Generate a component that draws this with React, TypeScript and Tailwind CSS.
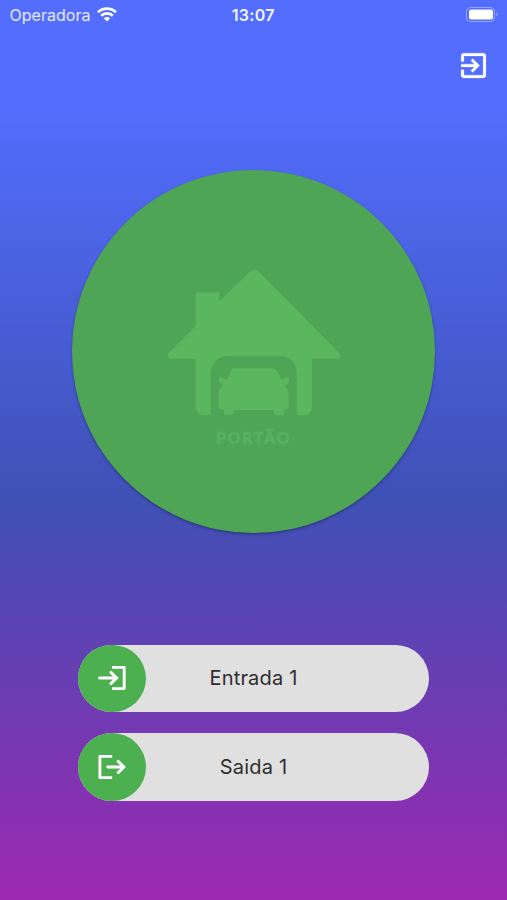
import type { ReactNode } from "react";

function StatusBar() {
  return (
    <div className="grid h-[29px] grid-cols-3 items-center pl-[9.5px] pr-[8px] text-white">
      <div className="flex items-center gap-[7px]">
        <span className="text-[16px] tracking-[0.02px] text-white/85">Operadora</span>
        <svg viewBox="0 0 20 15" className="h-[15px] w-[20px]" fill="none" stroke="white" strokeWidth="2.7">
          <path d="M1 5.2a13 13 0 0 1 18 0" />
          <path d="M4.2 8.7a8.4 8.4 0 0 1 11.6 0" />
          <path d="M10 14.6 6.9 11.4a4.5 4.5 0 0 1 6.2 0z" fill="white" stroke="none" />
        </svg>
      </div>
      <span className="-ml-[2px] text-center text-[16px] font-semibold tracking-[0.3px] text-white/95">13:07</span>
      <svg viewBox="0 0 34 18" className="h-[18px] w-[34px] justify-self-end">
        <rect x="1.5" y="1.5" width="28" height="14" rx="4" fill="none" stroke="white" strokeOpacity="0.4" />
        <rect x="4" y="3.5" width="24" height="10" rx="2.2" fill="white" />
        <path d="M31.3 6.5c1.8.7 1.8 3.3 0 4z" fill="white" fillOpacity="0.4" />
      </svg>
    </div>
  );
}

function ExitIcon() {
  return (
    <svg viewBox="0 0 24 24" className="h-[33px] w-[33px]" fill="white" stroke="white" strokeWidth="0.2">
      <path d="M10.09 15.59 11.5 17l5-5-5-5-1.41 1.41L12.67 11H3v2h9.67l-2.58 2.59zM19 3H5a2 2 0 0 0-2 2v4h2V5h14v14H5v-4H3v4c0 1.1.89 2 2 2h14c1.1 0 2-.9 2-2V5a2 2 0 0 0-2-2z" />
    </svg>
  );
}

function EnterArrow() {
  return (
    <svg viewBox="0 0 30 30" className="h-[30px] w-[30px]" fill="none" stroke="white" strokeWidth="2.9" strokeLinejoin="round">
      <path d="M15 4.4h12.2v21.2H15" />
      <path d="M2.5 15h17.5M13.9 9.4l5.8 5.6-5.8 5.6" strokeLinecap="round" />
    </svg>
  );
}

function LeaveArrow() {
  return (
    <svg viewBox="0 0 30 30" className="h-[30px] w-[30px]" fill="none" stroke="white" strokeWidth="2.9" strokeLinejoin="round">
      <path d="M15.2 4.4H2.9v21.2h12.3" />
      <path d="M10.7 15h16.4M21.2 9.4l5.8 5.6-5.8 5.6" strokeLinecap="round" />
    </svg>
  );
}

function GarageLogo() {
  return (
    <svg viewBox="-3 -1 570 480" className="h-[160px] w-[190px]" fill="#5ab65f">
      {/* house */}
      <path d="M270 33q12-10 25 0L535 275q6 6 5 18l-5 2h-79v142q0 28-28 28h-9q-9 0-9-9V338Q407 287 358 287H204Q153 290 152 340V456q0 9-9 9h-8q-28-2-28-27V295H30q-7 0-6-13 1-4 6-8l77-76v-94q0-8 8-8h56q8 0 8 8v19z" />
      {/* car */}
      <path d="M222 324h116q8 0 13 9l14 25 14-6q9-3 9 6-3 15-15 17l9 11q4 5 4 12v38q0 7-5 10l-8 3v9q0 7-7 7h-14q-7 0-9-6l-4-10H223l-3 10q-2 6-9 6h-12q-7 0-7-7v-9l-11-3q-6-3-6-10v-38q0-7 4-12l11-12q-12-3-15-16 1-10 11-6l14 6 13-26q3-9 9-9z" />
    </svg>
  );
}

function GateSlider({ label, icon }: { label: string; icon: ReactNode }) {
  return (
    <div className="grid h-[67.4px] w-[350.5px] grid-cols-[67.4px_1fr_67.4px] items-center rounded-full bg-[#e0e0e0]">
      <button className="flex h-[67.4px] w-[67.4px] items-center justify-center rounded-full bg-[#4caf50]">
        {icon}
      </button>
      <span className="text-center text-[20px] tracking-[0.2px] text-[#2e2e2e]">{label}</span>
    </div>
  );
}

export default function App() {
  return (
    <main className="flex h-[900px] w-[507px] flex-col overflow-hidden bg-[linear-gradient(to_bottom,#536dfe_103px,#3f51b5_501px,#9c27b0_900px)] font-['Inter',sans-serif]">
      <StatusBar />
      <header className="flex h-[73px] items-center justify-end pr-[17px]">
        <button aria-label="Sair">
          <ExitIcon />
        </button>
      </header>

      <section className="flex flex-col items-center pt-[67.5px]">
        <button className="flex h-[363.5px] w-[363.5px] flex-col items-center rounded-full bg-[#4fa556] pt-[90px] shadow-[0_1.5px_3px_rgba(0,0,0,0.3)]">
          <GarageLogo />
          <span className="mt-[7px] font-['Lato'] text-[16px] leading-[22px] font-black tracking-[1.6px] text-[#58b15e] [-webkit-text-stroke:0.6px_#58b15e]">
            PORTÃO
          </span>
        </button>
      </section>

      <section className="flex flex-col items-center gap-[21.4px] pt-[111.5px]">
        <GateSlider label="Entrada 1" icon={<EnterArrow />} />
        <GateSlider label="Saida 1" icon={<LeaveArrow />} />
      </section>
    </main>
  );
}
